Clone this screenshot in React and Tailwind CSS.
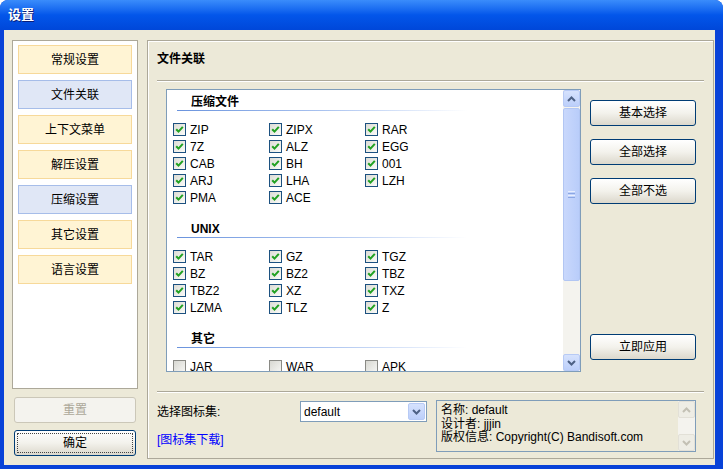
import React from "react";

const FONT = "font-['Tahoma','Liberation_Sans','Noto_Sans_CJK_SC',sans-serif]";

function Check({ checked }) {
  return (
    <span
      className={
        "w-[13px] h-[13px] shrink-0 border flex items-center justify-center " +
        (checked
          ? "border-[#1C5180] bg-gradient-to-br from-[#DCDCD5] to-[#FBFBF8]"
          : "border-[#8A8A85] bg-gradient-to-br from-[#D8D8D2] to-[#F6F6F3]")
      }
    >
      {checked && (
        <svg width="9" height="9" viewBox="0 0 9 9">
          <path d="M1.2 4.2 L3.5 6.6 L7.8 1.8" fill="none" stroke="#21A121" strokeWidth="2" />
        </svg>
      )}
    </span>
  );
}

function Section({ title, items, checked = true }) {
  return (
    <div className="pt-[5px] pb-[11px]">
      <div className="pl-[10px]">
        <div className="pl-[14px] h-[14px] leading-[14px] font-bold text-[12px] text-black">{title}</div>
        <div className="mt-[1px] h-[1px] w-[290px] bg-gradient-to-r from-[#6A93DD] via-[#A9C2EF] to-white" />
      </div>
      <div className="mt-[10px] pl-[6px] grid grid-cols-[96px_96px_96px]">
        {items.map((it, i) => (
          <div key={i} className="h-[17px] flex items-center">
            {it && (
              <>
                <Check checked={checked} />
                <span className="ml-[4px] text-[12px] leading-[14px] text-black">{it}</span>
              </>
            )}
          </div>
        ))}
      </div>
    </div>
  );
}

function Chevron({ up, color = "#4D6185" }) {
  return (
    <svg width="9" height="6" viewBox="0 0 9 6">
      <path
        d={up ? "M1 5 L4.5 1.5 L8 5" : "M1 1 L4.5 4.5 L8 1"}
        fill="none"
        stroke={color}
        strokeWidth="2"
      />
    </svg>
  );
}

function XPButton({ children, className = "" }) {
  return (
    <div
      className={
        "h-[26px] rounded-[3px] border border-[#003C74] bg-gradient-to-b from-[#FFFFFF] via-[#F3F2EC] to-[#DCD8CC] flex items-center justify-center text-[12px] text-black " +
        className
      }
    >
      {children}
    </div>
  );
}

function NavBtn({ label, sel }) {
  return (
    <div
      className={
        "h-[29px] border flex items-center justify-center text-[12px] text-black " +
        (sel ? "bg-[#E0E7F6] border-[#A6BDE9]" : "bg-[#FFF4D4] border-[#F7D99A]")
      }
    >
      {label}
    </div>
  );
}

export default function App() {
  const navs = [
    ["常规设置", false],
    ["文件关联", true],
    ["上下文菜单", false],
    ["解压设置", false],
    ["压缩设置", true],
    ["其它设置", false],
    ["语言设置", false],
  ];
  return (
    <div className={"w-[723px] h-[469px] flex flex-col bg-[#0842D8] rounded-t-[8px] overflow-hidden " + FONT}>
      {/* title bar */}
      <div className="h-[30px] shrink-0 bg-gradient-to-b from-[#3A8CFB] via-[#0356EA] to-[#0047D9] flex items-center pl-[8px]">
        <span className="text-white font-bold text-[13px] [text-shadow:1px_1px_0_#0A1E7A]">设置</span>
      </div>
      {/* body */}
      <div className="flex-1 ml-[4px] mr-[8px] mb-[4px] bg-[#ECE9D8] flex pt-[10px] pl-[8px]">
        {/* left column */}
        <div className="w-[126px] flex flex-col">
          <div className="h-[349px] bg-white border border-[#ACA899] pt-[4px] px-[5px] flex flex-col gap-[6px]">
            {navs.map(([l, s]) => (
              <NavBtn key={l} label={l} sel={s} />
            ))}
          </div>
          <div className="mt-[8px] mx-[2px] h-[26px] rounded-[3px] border border-[#CBC7B8] bg-[#F4F3EE] flex items-center justify-center text-[12px] text-[#ACA899]">
            重置
          </div>
          <div className="mt-[7px] mx-[2px] h-[26px] rounded-[3px] border border-[#003C74] bg-gradient-to-b from-[#FFFFFF] via-[#F3F2EC] to-[#DCD8CC] p-[2px]">
            <div className="h-full border border-dotted border-[#444] flex items-center justify-center text-[12px] text-black">
              确定
            </div>
          </div>
        </div>
        {/* right panel */}
        <div className="ml-[9px] w-[567px] h-[419px] border border-[#ACA899] shadow-[inset_1px_1px_0_#fff] px-[9px] flex flex-col">
          <div className="h-[39px] pt-[11px] font-bold text-[12px] leading-[14px] text-black">文件关联</div>
          <div className="h-[2px] border-t border-[#ACA899] border-b border-b-white" />
          <div className="mt-[7px] flex">
            {/* list box */}
            <div className="ml-[9px] w-[415px] h-[283px] border border-[#7F9DB9] bg-white flex overflow-hidden">
              <div className="flex-1 overflow-hidden">
                <Section
                  title="压缩文件"
                  items={["ZIP", "ZIPX", "RAR", "7Z", "ALZ", "EGG", "CAB", "BH", "001", "ARJ", "LHA", "LZH", "PMA", "ACE", ""]}
                />
                <Section
                  title="UNIX"
                  items={["TAR", "GZ", "TGZ", "BZ", "BZ2", "TBZ", "TBZ2", "XZ", "TXZ", "LZMA", "TLZ", "Z"]}
                />
                <Section title="其它" items={["JAR", "WAR", "APK"]} checked={false} />
              </div>
              {/* scrollbar */}
              <div className="w-[17px] bg-[#F4F3EE] flex flex-col">
                <div className="h-[17px] rounded-[2px] border border-[#B7CAF5] bg-gradient-to-b from-[#D6E2FD] to-[#BCCFFA] flex items-center justify-center">
                  <Chevron up />
                </div>
                <div className="mt-[1px] h-[173px] rounded-[2px] border border-[#B2C6F3] bg-gradient-to-r from-[#C9D8FC] to-[#B9CDFA] flex flex-col items-center justify-center gap-[1px]">
                  <div className="w-[7px] h-[1px] bg-[#E8EEFD]" />
                  <div className="w-[7px] h-[1px] bg-[#8CA7E3]" />
                  <div className="w-[7px] h-[1px] bg-[#E8EEFD]" />
                  <div className="w-[7px] h-[1px] bg-[#8CA7E3]" />
                </div>
                <div className="flex-1" />
                <div className="h-[17px] rounded-[2px] border border-[#B7CAF5] bg-gradient-to-b from-[#D6E2FD] to-[#BCCFFA] flex items-center justify-center">
                  <Chevron />
                </div>
              </div>
            </div>
            {/* buttons */}
            <div className="ml-[9px] w-[106px] h-[283px] pt-[11px] pb-[12px] flex flex-col">
              <XPButton>基本选择</XPButton>
              <XPButton className="mt-[13px]">全部选择</XPButton>
              <XPButton className="mt-[13px]">全部不选</XPButton>
              <XPButton className="mt-auto">立即应用</XPButton>
            </div>
          </div>
          <div className="mt-[19px] h-[2px] border-t border-[#ACA899] border-b border-b-white" />
          <div className="flex">
            <div className="w-[270px] flex flex-col">
              <div className="mt-[8px] h-[21px] flex items-center justify-between">
                <span className="text-[12px] text-black">选择图标集:</span>
                <div className="w-[127px] h-[21px] border border-[#7F9DB9] bg-white flex items-center">
                  <span className="flex-1 pl-[3px] text-[12px] text-black">default</span>
                  <div className="w-[17px] h-[17px] mr-[1px] rounded-[2px] border border-[#B7CAF5] bg-gradient-to-b from-[#D6E2FD] to-[#BCCFFA] flex items-center justify-center">
                    <Chevron />
                  </div>
                </div>
              </div>
              <div className="mt-[11px] text-[12px] leading-[14px] text-[#0000FF]">[图标集下载]</div>
            </div>
            <div className="ml-[9px] mt-[7px] w-[260px] h-[52px] border border-[#7F9DB9] flex">
              <div className="flex-1 pl-[4px] pt-[3px] text-[12px] leading-[13.5px] text-black">
                <div>名称: default</div>
                <div>设计者: jjjin</div>
                <div>版权信息: Copyright(C) Bandisoft.com</div>
              </div>
              <div className="w-[17px] bg-[#F4F3EE] flex flex-col justify-between">
                <div className="h-[17px] rounded-[2px] border border-[#E2E0D7] bg-[#EEEDE5] flex items-center justify-center">
                  <Chevron up color="#C3C0B4" />
                </div>
                <div className="h-[17px] rounded-[2px] border border-[#E2E0D7] bg-[#EEEDE5] flex items-center justify-center">
                  <Chevron color="#C3C0B4" />
                </div>
              </div>
            </div>
          </div>
        </div>
      </div>
    </div>
  );
}
